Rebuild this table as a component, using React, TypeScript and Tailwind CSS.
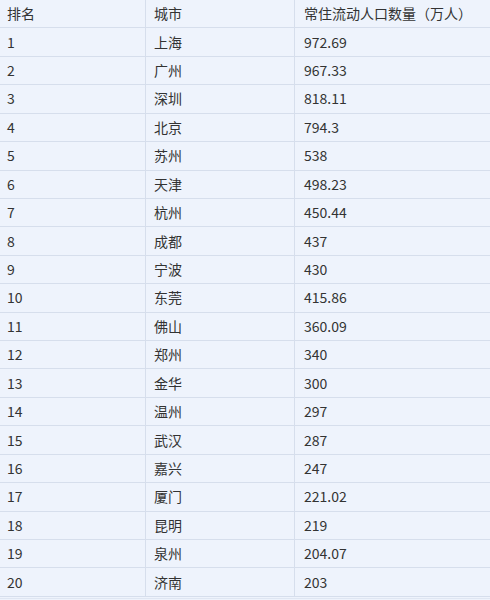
import React from "react";

const rows: [string, string, string][] = [
  ["1", "上海", "972.69"],
  ["2", "广州", "967.33"],
  ["3", "深圳", "818.11"],
  ["4", "北京", "794.3"],
  ["5", "苏州", "538"],
  ["6", "天津", "498.23"],
  ["7", "杭州", "450.44"],
  ["8", "成都", "437"],
  ["9", "宁波", "430"],
  ["10", "东莞", "415.86"],
  ["11", "佛山", "360.09"],
  ["12", "郑州", "340"],
  ["13", "金华", "300"],
  ["14", "温州", "297"],
  ["15", "武汉", "287"],
  ["16", "嘉兴", "247"],
  ["17", "厦门", "221.02"],
  ["18", "昆明", "219"],
  ["19", "泉州", "204.07"],
  ["20", "济南", "203"],
];

function Row({ cells }: { cells: [string, string, string] }) {
  return (
    <div className="flex h-[28.43px] border-b border-[#d6deec] items-center">
      <div className="w-[146px] h-full flex items-center pl-[7px] border-r border-[#d6deec]">{cells[0]}</div>
      <div className="w-[149px] h-full flex items-center pl-[8px] border-r border-[#d6deec]">{cells[1]}</div>
      <div className="flex-1 h-full flex items-center pl-[9px]">{cells[2]}</div>
    </div>
  );
}

export default function App() {
  return (
    <div
      className="w-[490px] h-[600px] bg-[#eef3fc] text-[#333333] text-[14px] overflow-hidden"
      style={{ fontFamily: '"Noto Sans CJK SC", "Noto Sans", sans-serif' }}
    >
      <Row cells={["排名", "城市", "常住流动人口数量（万人）"]} />
      {rows.map((r) => (
        <Row key={r[0]} cells={r} />
      ))}
      <div className="h-[1px] mt-[1px] bg-[#dfe6f2]" />
    </div>
  );
}
